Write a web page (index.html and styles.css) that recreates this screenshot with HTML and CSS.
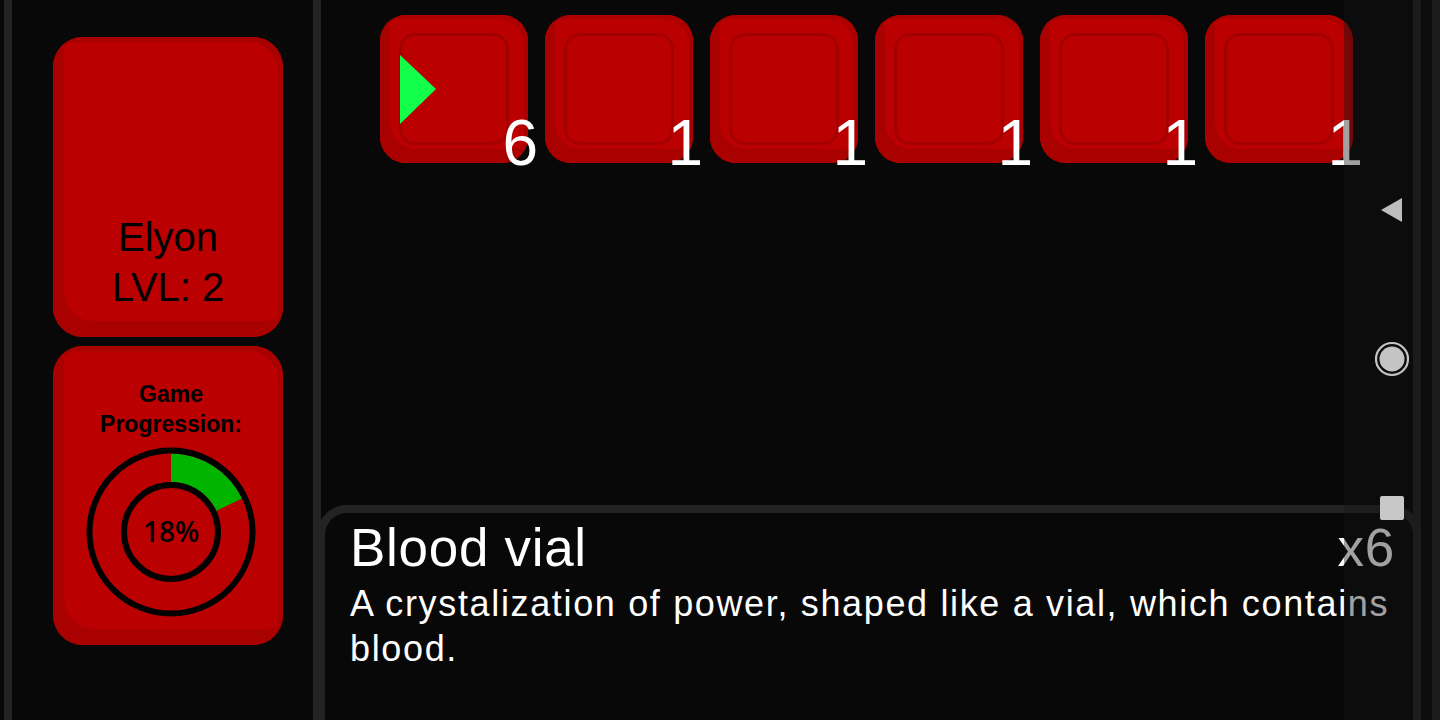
FILE: index.html
```html
<!DOCTYPE html>
<html lang="en">
<head>
  <meta charset="UTF-8" />
  <title>Inventory</title>
  <link rel="stylesheet" href="styles.css">
</head>
<body>
  <div class="app">
    <!-- Player sidebar -->
    <div class="sidebar">
      <div class="card nameCard">
        <div class="playerName">Elyon</div>
        <div class="playerName">LVL: 2</div>
      </div>

      <div class="card progressCard">
        <div class="progressLabel">Game<br />Progression:</div>
        <svg class="donut" width="172" height="172" viewBox="0 0 172 172">
          <path d="M86 7.5 A78.5 78.5 0 0 1 157 52.6 L131.3 64.8 A50 50 0 0 0 86 36 Z" fill="#00b400" />
          <circle cx="86" cy="86" r="81.5" fill="none" stroke="#000" stroke-width="6" />
          <circle cx="86" cy="86" r="47" fill="none" stroke="#000" stroke-width="6" />
          <text x="86" y="96" text-anchor="middle" class="donutText">18%</text>
        </svg>
      </div>
    </div>

    <!-- Inventory -->
    <div class="main">
      <div class="slotRow">
        <div class="slot">
          <div class="slotInner"></div>
          <svg class="cursor" width="36" height="70" viewBox="0 0 36 70">
            <polygon points="0,0 36,34 0,69" fill="#12ff4a" />
          </svg>
          <span class="count">6</span>
        </div>
        <div class="slot"><div class="slotInner"></div><span class="count">1</span></div>
        <div class="slot"><div class="slotInner"></div><span class="count">1</span></div>
        <div class="slot"><div class="slotInner"></div><span class="count">1</span></div>
        <div class="slot"><div class="slotInner"></div><span class="count">1</span></div>
        <div class="slot"><div class="slotInner"></div><span class="count">1</span></div>
      </div>

      <div class="details">
        <div class="detailsHead">
          <span class="itemName">Blood vial</span>
          <span class="itemQty">x6</span>
        </div>
        <div class="itemDesc">A crystalization of power, shaped like a vial, which contains blood.</div>
      </div>
    </div>

    <div class="rail"></div>
  </div>

  <!-- System navigation bar -->
  <div class="navBar">
    <svg class="navBack" width="24" height="26" viewBox="0 0 24 26">
      <polygon points="22,1 22,25 1,13" fill="#bdbdbd" />
    </svg>
    <svg class="navHome" width="36" height="36" viewBox="0 0 36 36">
      <circle cx="18" cy="18" r="16" fill="none" stroke="#c4c4c4" stroke-width="2.2" />
      <circle cx="18" cy="18" r="12.5" fill="#c4c4c4" />
    </svg>
    <svg class="navRecent" width="24" height="24" viewBox="0 0 24 24">
      <rect x="0" y="0" width="24" height="24" rx="2" fill="#c8c8c8" />
    </svg>
  </div>
</body>
</html>
```

FILE: styles.css
```css
html, body {
  margin: 0;
  height: 720px;
  overflow: hidden;
  background: #080808;
  font-family: "Liberation Sans", Arial, sans-serif;
}
.app {
  display: flex;
  height: 720px;
}
.sidebar {
  width: 317px;
  margin-left: 4px;
  border-left: 8px solid #232323;
  border-right: 8px solid #232323;
  padding: 37px 0 0 41px;
  box-sizing: border-box;
  flex-shrink: 0;
  display: flex;
  flex-direction: column;
  gap: 9px;
}
.card {
  width: 230px;
  background: #ba0000;
  border-radius: 30px;
  box-shadow: inset 11px -16px 0 #a90000, inset -5px 5px 0 #a90000;
  box-sizing: border-box;
  color: #000;
  text-align: center;
}
.nameCard {
  height: 300px;
  display: flex;
  flex-direction: column;
  justify-content: flex-end;
  padding-bottom: 25px;
}
.playerName {
  font-size: 40px;
  line-height: 50px;
}
.progressCard {
  height: 299px;
  padding-top: 33px;
  display: flex;
  flex-direction: column;
  align-items: center;
}
.progressLabel {
  font-size: 23px;
  font-weight: bold;
  line-height: 30px;
  padding-left: 6px;
}
.donut {
  margin-top: 7px;
  margin-left: 6px;
}
.donutText {
  font-family: "Open Sans", sans-serif;
  font-weight: 600;
  font-size: 28px;
  fill: #000;
}
.main {
  width: 1092px;
  border-right: 8px solid #202020;
  display: flex;
  flex-direction: column;
  flex-shrink: 0;
}
.slotRow {
  display: flex;
  gap: 17px;
  padding: 15px 0 0 59px;
}
.slot {
  position: relative;
  width: 148px;
  height: 148px;
  background: #ba0000;
  border-radius: 26px;
  box-shadow: inset 10px -14px 0 #a90000, inset -4px 4px 0 #ac0000;
  box-sizing: border-box;
  padding: 18px 19px 0 19px;
}
.slotInner {
  height: 112px;
  border: 3px solid #a30000;
  border-radius: 16px;
  box-sizing: border-box;
}
.cursor {
  position: absolute;
  left: 20px;
  top: 40px;
}
.count {
  position: absolute;
  right: -10px;
  bottom: -12px;
  font-size: 64px;
  line-height: 64px;
  color: #fff;
}
.details {
  margin: auto -8px -15px -4px;
  height: 230px;
  flex-shrink: 0;
  border: 8px solid #232323;
  border-bottom: none;
  border-radius: 30px 30px 0 0;
  background: #080808;
  padding: 5px 18px 0 25px;
  box-sizing: border-box;
  color: #fff;
}
.detailsHead {
  display: flex;
  justify-content: space-between;
}
.itemName, .itemQty {
  font-size: 53px;
  line-height: 60px;
  letter-spacing: 0.7px;
}
.itemDesc {
  margin-top: 3px;
  font-size: 36px;
  line-height: 45px;
  letter-spacing: 1.65px;
}
.rail {
  width: 8px;
  margin-left: 11px;
  background: #202020;
}
.navBar {
  position: absolute;
  top: 0;
  right: 0;
  width: 96px;
  height: 720px;
  background: rgba(20, 20, 20, 0.4);
  display: flex;
  flex-direction: column;
  align-items: center;
  padding-top: 197px;
  box-sizing: border-box;
}
.navHome {
  margin-top: 118px;
}
.navRecent {
  margin-top: 119px;
}
```
